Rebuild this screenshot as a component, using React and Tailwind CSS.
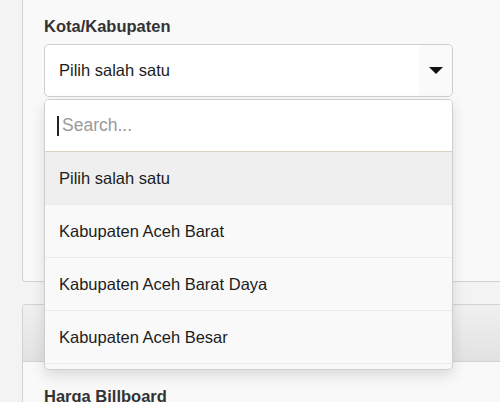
export default function App() {
  const options = [
    'Pilih salah satu',
    'Kabupaten Aceh Barat',
    'Kabupaten Aceh Barat Daya',
    'Kabupaten Aceh Besar',
    'Kabupaten Aceh Jaya',
  ]

  return (
    <div className="h-[402px] overflow-hidden bg-[#f3f3f3] pl-[22px] font-['Liberation_Sans',Arial,sans-serif]">
      {/* Location card */}
      <div className="h-[282px] border-l border-b border-[#d2d2d2] rounded-bl-[4px] bg-[#f9f9f9] pl-[21px] pt-[16px]">
        <label className="block text-[16.5px] leading-[20px] font-bold text-[#333]">Kota/Kabupaten</label>
        <div className="relative mt-[8px] w-[409px]">
          <div className="flex h-[53px] rounded-[5px] border border-[#cecece] bg-white">
            <span className="flex-1 flex items-center pl-[14px] text-[16.5px] text-[#1c1c1c]">Pilih salah satu</span>
            <span className="w-[33px] flex items-center justify-center rounded-r-[5px] bg-[#fafafa]">
              <svg width="14" height="7" viewBox="0 0 14 7">
                <path d="M0 0 H14 L7 7 Z" fill="#111" />
              </svg>
            </span>
          </div>

          {/* open dropdown */}
          <div className="absolute left-0 top-[55px] z-10 w-full h-[271px] overflow-hidden rounded-[5px] border border-[#cecece] bg-[#f9f9f9] shadow-[0_6px_14px_rgba(0,0,0,0.12)]">
            <div className="flex h-[52px] items-center bg-white border-b border-[#d9d0c6] pl-[12px]">
              <span className="w-[2px] h-[20px] bg-[#222]" />
              <span className="ml-[3px] text-[17.5px] text-[#9a9a9a]">Search...</span>
            </div>
            {options.map((o, i) => (
              <div
                key={o}
                className={`flex h-[53px] items-center border-b border-[#ebebeb] pl-[14px] text-[16.5px] text-[#1c1c1c] ${i === 0 ? 'bg-[#efefef]' : ''}`}
              >
                {o}
              </div>
            ))}
          </div>
        </div>
      </div>

      {/* Price card */}
      <div className="mt-[22px] border-l border-t border-[#d2d2d2] rounded-tl-[4px] bg-[#f9f9f9]">
        <div className="h-[57px] border-b border-[#d2d2d2] bg-gradient-to-b from-[#f0f0f0] to-[#e2e2e2] rounded-tl-[4px]" />
        <div className="pl-[21px] pt-[24px]">
          <label className="block text-[16.5px] leading-[20px] font-bold text-[#333]">Harga Billboard</label>
        </div>
      </div>
    </div>
  )
}
